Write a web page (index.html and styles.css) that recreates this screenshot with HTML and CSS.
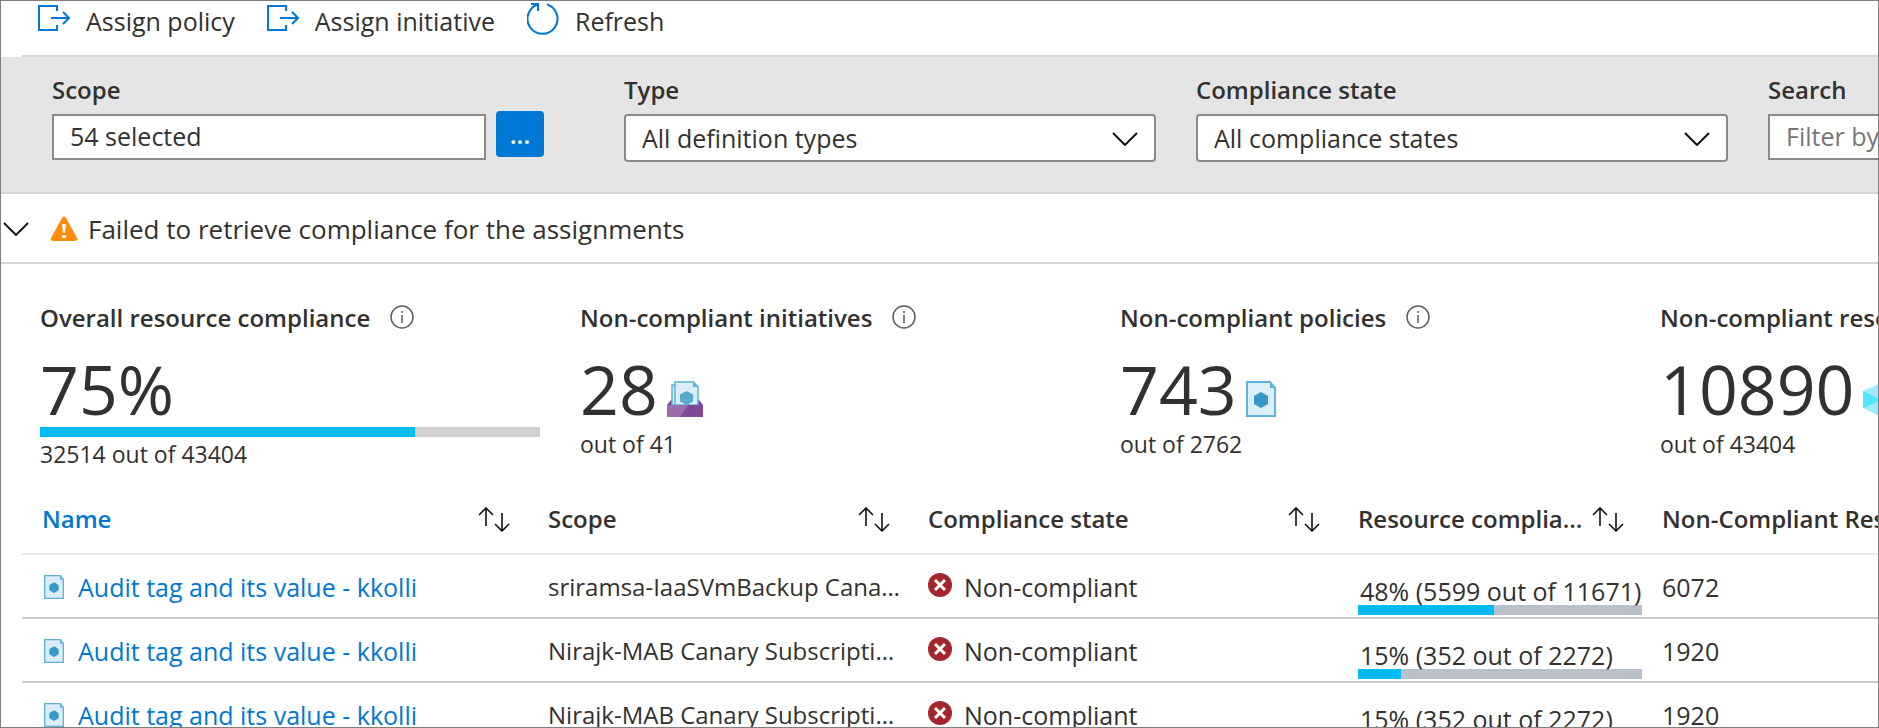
FILE: index.html
```html
<!DOCTYPE html>
<html lang="en">
<head>
<meta charset="utf-8">
<title>Policy compliance</title>
<link rel="stylesheet" href="styles.css">
</head>
<body>
<svg class="symbols" aria-hidden="true">
  <symbol id="assign" viewBox="0 0 32 26"><path d="M19 6V1H1v24h18v-5M13 13h18M25 7l6 6-6 6" fill="none" stroke="#0078d4" stroke-width="2"/></symbol>
  <symbol id="refresh" viewBox="0 0 32 32"><path d="M20 1.500a15 15 0 1 1-9 0M4 1h7v7" fill="none" stroke="#0078d4" stroke-width="2"/></symbol>
  <symbol id="chevron" viewBox="0 0 26 14"><path d="M1 1l12 12L25 1" fill="none" stroke="#111" stroke-width="2"/></symbol>
  <symbol id="warning" viewBox="0 0 28 26"><path d="M12 2q2-3 4 0l11 20q1 3-2 3H3q-3 0-2-3z" fill="#ff8c00"/><path d="M12 8h4l-1 9h-2zM12 19h4v3h-4z" fill="#fff"/></symbol>
  <symbol id="info" viewBox="0 0 24 24"><circle cx="12" cy="12" r="11" fill="none" stroke="#605e5c" stroke-width="1.5"/><path d="M12 10v8M12 6v2" stroke="#605e5c" stroke-width="1.5"/></symbol>
  <symbol id="sort" viewBox="0 0 32 25"><path d="M8 19V1M1 8l7-7 7 7M24 6v18M17 17l7 7 7-7" fill="none" stroke="#111" stroke-width="1.6"/></symbol>
  <symbol id="policy" viewBox="0 0 30 36"><path d="M1 1h23l5 6v28H1z" fill="#dceef7" stroke="#59b4d9" stroke-width="2"/><path d="M24 0l6 7h-6z" fill="#59b4d9"/><path d="M15 11l7 4v8l-7 4-7-4v-8z" fill="#3999c6"/></symbol>
  <symbol id="initiative" viewBox="0 0 36 36"><path d="M0 24l4-5h28l4 5v12H0z" fill="#804998"/><path d="M5 24V4h5v20z" fill="#dceef7" stroke="#59b4d9" stroke-width="1.5"/><path d="M8 24V1h18l5 5v18z" fill="#dceef7" stroke="#59b4d9" stroke-width="1.5"/><path d="M26 0l6 6h-6z" fill="#59b4d9"/><path d="M19.500 10l6.500 3.500v7l-6.500 3.500-6.500-3.500v-7z" fill="#59a9cf"/><path d="M0 24h36v12H0z" fill="#804998"/><path d="M0 24h21l-8 12H0z" fill="#9a6cae"/></symbol>
  <symbol id="cube" viewBox="0 0 36 34"><path d="M18 0l18 8v17l-18 9L0 25V8z" fill="#9cebff"/><path d="M0 8l18 9L0 25z" fill="#50e6ff"/></symbol>
  <symbol id="error" viewBox="0 0 24 24"><circle cx="12" cy="12" r="12" fill="#a4262c"/><path d="M7 7l10 10M17 7L7 17" stroke="#fff" stroke-width="3"/></symbol>
</svg>

<main class="blade">
  <nav class="toolbar">
    <button class="command"><svg class="icon-assign"><use href="#assign"/></svg>Assign policy</button>
    <button class="command"><svg class="icon-assign"><use href="#assign"/></svg>Assign initiative</button>
    <button class="command"><svg class="icon-refresh"><use href="#refresh"/></svg>Refresh</button>
  </nav>

  <form class="filters">
    <div class="field">
      <label for="scope">Scope</label>
      <div class="scope-row">
        <input id="scope" class="box" type="text" value="54 selected" readonly>
        <button class="browse" type="button" aria-label="Browse scopes">...</button>
      </div>
    </div>
    <div class="field">
      <label for="type">Type</label>
      <div class="select-wrap">
        <select id="type" class="box dropdown"><option>All definition types</option></select>
        <svg class="caret"><use href="#chevron"/></svg>
      </div>
    </div>
    <div class="field">
      <label for="state">Compliance state</label>
      <div class="select-wrap">
        <select id="state" class="box dropdown"><option>All compliance states</option></select>
        <svg class="caret"><use href="#chevron"/></svg>
      </div>
    </div>
    <div class="field">
      <label for="search">Search</label>
      <input id="search" class="box" type="text" placeholder="Filter by name or ID...">
    </div>
  </form>

  <section class="alert">
    <button class="expander" aria-label="Expand"><svg class="icon-chevron"><use href="#chevron"/></svg></button>
    <svg class="icon-warning"><use href="#warning"/></svg>
    <span>Failed to retrieve compliance for the assignments</span>
  </section>

  <section class="stats">
    <article class="stat">
      <h2>Overall resource compliance <svg class="icon-info"><use href="#info"/></svg></h2>
      <div class="figure">75%</div>
      <div class="meter"><div class="meter-fill" style="width:75%"></div></div>
      <p>32514 out of 43404</p>
    </article>
    <article class="stat">
      <h2>Non-compliant initiatives <svg class="icon-info"><use href="#info"/></svg></h2>
      <div class="figure">28<svg class="icon-initiative"><use href="#initiative"/></svg></div>
      <p>out of 41</p>
    </article>
    <article class="stat">
      <h2>Non-compliant policies <svg class="icon-info"><use href="#info"/></svg></h2>
      <div class="figure">743<svg class="icon-policy"><use href="#policy"/></svg></div>
      <p>out of 2762</p>
    </article>
    <article class="stat">
      <h2>Non-compliant resources <svg class="icon-info"><use href="#info"/></svg></h2>
      <div class="figure">10890<svg class="icon-cube"><use href="#cube"/></svg></div>
      <p>out of 43404</p>
    </article>
  </section>

  <table class="grid">
    <colgroup><col class="col-name"><col class="col-scope"><col class="col-state"><col class="col-resource"><col class="col-count"></colgroup>
    <thead>
      <tr>
        <th class="sorted"><div class="head"><span>Name</span><svg class="icon-sort"><use href="#sort"/></svg></div></th>
        <th><div class="head"><span>Scope</span><svg class="icon-sort"><use href="#sort"/></svg></div></th>
        <th><div class="head"><span>Compliance state</span><svg class="icon-sort"><use href="#sort"/></svg></div></th>
        <th><div class="head"><span>Resource compliance</span><svg class="icon-sort"><use href="#sort"/></svg></div></th>
        <th><div class="head"><span>Non-Compliant Resources</span></div></th>
      </tr>
    </thead>
    <tbody>
      <tr>
        <td><div class="name"><svg class="icon-row"><use href="#policy"/></svg><a href="#">Audit tag and its value - kkolli</a></div></td>
        <td class="scope">sriramsa-IaaSVmBackup Canary Subscription</td>
        <td><div class="state"><svg class="icon-error"><use href="#error"/></svg>Non-compliant</div></td>
        <td class="resource"><span>48% (5599 out of 11671)</span><div class="bar"><div class="meter-fill" style="width:48%"></div></div></td>
        <td>6072</td>
      </tr>
      <tr>
        <td><div class="name"><svg class="icon-row"><use href="#policy"/></svg><a href="#">Audit tag and its value - kkolli</a></div></td>
        <td class="scope">Nirajk-MAB Canary Subscription 01</td>
        <td><div class="state"><svg class="icon-error"><use href="#error"/></svg>Non-compliant</div></td>
        <td class="resource"><span>15% (352 out of 2272)</span><div class="bar"><div class="meter-fill" style="width:15%"></div></div></td>
        <td>1920</td>
      </tr>
      <tr>
        <td><div class="name"><svg class="icon-row"><use href="#policy"/></svg><a href="#">Audit tag and its value - kkolli</a></div></td>
        <td class="scope">Nirajk-MAB Canary Subscription 01</td>
        <td><div class="state"><svg class="icon-error"><use href="#error"/></svg>Non-compliant</div></td>
        <td class="resource"><span>15% (352 out of 2272)</span><div class="bar"><div class="meter-fill" style="width:15%"></div></div></td>
        <td>1920</td>
      </tr>
    </tbody>
  </table>
</main>
</body>
</html>
```
FILE: styles.css
```css
* { box-sizing: border-box; }
body {
  margin: 0;
  font-family: "Open Sans", "Noto Sans", sans-serif;
  font-size: 25px;
  line-height: 32px;
  color: #323130;
  background: #fff;
}
button, input, select { font: inherit; color: inherit; }
svg { display: block; flex: none; }
.symbols { display: none; }

.blade {
  height: 100vh;
  overflow: hidden;
  border: 1px solid #7f7f7f;
}

.toolbar {
  display: flex;
  gap: 32px;
  height: 56px;
  margin-left: 21px;
  padding: 4px 0 18px 16px;
  border-bottom: 2px solid #d6d6d6;
}
.command {
  display: flex;
  align-items: center;
  gap: 16px;
  padding: 0;
  border: 0;
  background: none;
  line-height: 32px;
}
.icon-assign { width: 32px; height: 26px; margin-bottom: 6px; }
.icon-refresh { width: 32px; height: 32px; margin-bottom: 4px; }

.filters {
  display: flex;
  gap: 40px;
  height: 137px;
  padding: 17px 0 0 51px;
  background: #e5e5e5;
  border-bottom: 2px solid #d6d6d6;
}
.field { flex: none; width: 532px; }
.field label {
  display: block;
  margin-bottom: 8px;
  font-size: 24px;
  font-weight: 600;
}
.box {
  width: 100%;
  height: 46px;
  padding: 0 16px 2px;
  border: 2px solid #8a8a8a;
  border-radius: 0;
  background: #fff;
}
.box::placeholder { color: #767676; }
.scope-row { display: flex; gap: 10px; padding-right: 40px; }
.browse {
  flex: none;
  width: 48px;
  height: 46px;
  margin-top: -3px;
  padding: 0;
  border: 0;
  border-radius: 4px;
  color: #fff;
  background: #0078d7;
  font-weight: 600;
}
.select-wrap { position: relative; }
.dropdown { height: 48px; padding: 0 16px; border-radius: 4px; appearance: none; }
.caret {
  position: absolute;
  right: 18px;
  top: 18px;
  width: 26px;
  height: 14px;
  pointer-events: none;
}

.alert {
  display: flex;
  align-items: center;
  height: 70px;
  padding: 2px 0 0 2px;
  border-bottom: 2px solid #d6d6d6;
  font-size: 26px;
}
.expander { padding: 0; border: 0; background: none; }
.icon-chevron { width: 26px; height: 14px; }
.icon-warning { width: 28px; height: 26px; margin: 0 10px 0 21px; }

.stats {
  display: flex;
  gap: 40px;
  height: 223px;
  padding: 38px 0 0 39px;
}
.stat { flex: none; width: 500px; }
.stat h2 {
  display: flex;
  align-items: center;
  gap: 20px;
  margin: 0;
  font-size: 24px;
  font-weight: 600;
  white-space: nowrap;
}
.icon-info { width: 24px; height: 24px; margin-bottom: 2px; }
.figure {
  display: flex;
  align-items: flex-end;
  gap: 9px;
  height: 77px;
  margin-top: 16px;
  font-size: 68px;
  line-height: 76px;
}
.figure svg { margin-bottom: 10px; }
.icon-initiative { width: 36px; height: 36px; }
.icon-policy { width: 30px; height: 36px; }
.icon-cube { width: 36px; height: 34px; }
.stat p { margin: 1px 0 0; font-size: 23px; }
.meter { height: 10px; background: #d0d0d0; }
.meter-fill { height: 100%; background: #00bcf2; }

.grid {
  width: 1920px;
  margin-left: 21px;
  border-collapse: separate;
  border-spacing: 0;
  table-layout: fixed;
}
.col-name { width: 506px; }
.col-scope { width: 380px; }
.col-state { width: 430px; }
.col-resource { width: 304px; }
.grid th {
  height: 68px;
  padding: 0 18px 2px 20px;
  border-bottom: 2px solid #eaeaea;
  font-size: 24px;
  font-weight: 600;
  text-align: left;
}
.grid .sorted { color: #0078d4; }
.head { display: flex; align-items: center; justify-content: space-between; }
.head span { overflow: hidden; text-overflow: ellipsis; white-space: nowrap; }
.icon-sort { width: 32px; height: 25px; }
.grid td {
  height: 64px;
  padding: 1px 0 0 20px;
  border-bottom: 2px solid #ccc;
  white-space: nowrap;
}
.name { display: flex; align-items: center; gap: 14px; padding-left: 2px; }
.name a { color: #0078d4; text-decoration: none; }
.icon-row { width: 20px; height: 24px; }
.grid .scope { overflow: hidden; font-size: 24px; text-overflow: ellipsis; }
.state { display: flex; align-items: center; gap: 12px; }
.icon-error { width: 24px; height: 24px; margin-bottom: 4px; }
.grid .resource { padding-bottom: 2px; vertical-align: bottom; }
.resource span { display: block; padding-left: 2px; line-height: 28px; }
.bar { height: 10px; background: #bbc1ca; }
```
